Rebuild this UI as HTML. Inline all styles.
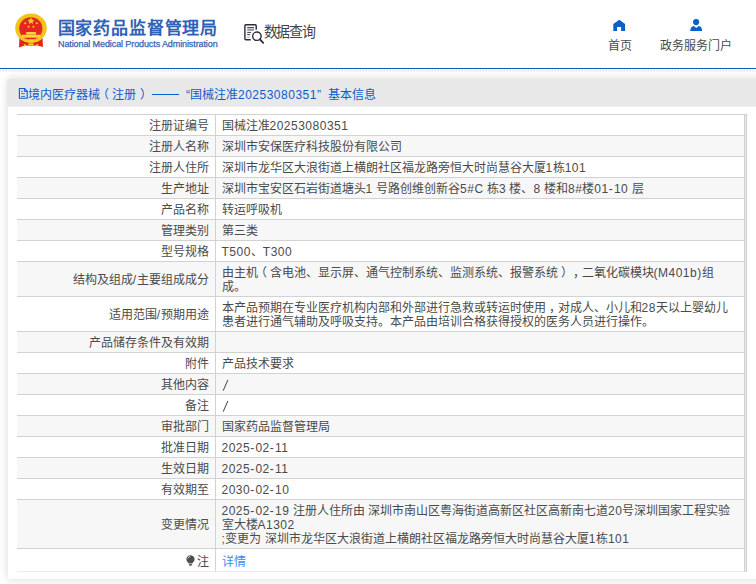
<!DOCTYPE html>
<html lang="zh-CN">
<head>
<meta charset="utf-8">
<style>
*{margin:0;padding:0;box-sizing:border-box;}
html,body{width:756px;height:584px;overflow:hidden;background:#fff;}
body{font-family:"Liberation Sans",sans-serif;color:#333;position:relative;text-spacing-trim:space-all;}
.hdr{position:absolute;left:0;top:0;width:756px;height:68px;background:#fff;}
.emb{position:absolute;left:0;top:0;}
.t1{position:absolute;left:57.5px;top:17.5px;font-size:17px;line-height:22px;font-weight:bold;color:#2d62b8;letter-spacing:0.85px;white-space:nowrap;}
.t2{position:absolute;left:58px;top:38px;font-size:9px;line-height:12px;color:#3563b4;font-weight:normal;-webkit-text-stroke:0.25px #3563b4;letter-spacing:-0.1px;white-space:nowrap;}
.dq{position:absolute;left:0;top:0;}
.dqt{position:absolute;left:263.5px;top:22px;font-size:14px;line-height:18px;color:#444;letter-spacing:-1.1px;transform:scaleY(1.05);transform-origin:0 0;white-space:nowrap;}
.nav{position:absolute;top:37.5px;font-size:12px;line-height:16px;color:#4a4a4a;white-space:nowrap;text-align:center;}
.blue{position:absolute;left:0;top:68px;width:756px;height:1px;background:#0b5cc0;}
.dots{position:absolute;left:0;top:70px;}
.panel{position:absolute;left:8px;top:79px;width:760px;height:500px;background:#fff;
 box-shadow:0 0 9px rgba(0,0,0,0.16);}
.ph{position:absolute;left:-1px;top:0;width:761px;height:28px;background:#e8e8e8;border-bottom:1px solid #eef0f8;}
.dsh{display:inline-block;width:27px;height:1px;background:#0b5ccc;vertical-align:4px;margin-left:4px;}
.q1{margin-left:7px;}
.q2{}
.jb{margin-left:7px;}
.phi{position:absolute;left:11px;top:8px;}
.pht{position:absolute;left:21px;top:7.6px;font-size:12px;line-height:16px;color:#0b5ccc;white-space:nowrap;}
table{position:absolute;left:9px;top:35px;width:728px;border-collapse:collapse;font-size:12px;line-height:14px;color:#4a4a4a;}
td{border-top:1px solid #d2d2d2;padding:4px 6px 2px 6px;vertical-align:middle;white-space:nowrap;}
td.l{width:198px;text-align:right;border-right:1px solid #d2d2d2;}
tr:nth-child(even) td{background:#f7f7f7;}
tr.last td{padding-top:6px;padding-bottom:2px;height:23px;border-bottom:1px solid #e8eaf4;}
.n{letter-spacing:0.5px;}
.lp{position:relative;left:-2.5px;}
.rp{position:relative;left:3px;}
.h{letter-spacing:1.2px;}
.bulb{vertical-align:0px;margin-right:2px;}
.rb{position:absolute;left:736px;top:35px;width:3px;height:458px;border:1px solid #d0d0d0;border-bottom:0;background:#ebebf2;}
a{color:#3c8bf0;text-decoration:none;}
</style>
</head>
<body>
<div class="hdr">
 <svg class="emb" width="60" height="52" viewBox="0 0 60 52">
  <path d="M19.5 38 L42.5 38 L43 47 Q37 44.5 31 46 Q25 44.5 19 47.5Z" fill="#e2231a"/>
  <ellipse cx="31" cy="28" rx="15.8" ry="14.6" fill="#f2c318"/>
  <ellipse cx="30.8" cy="28.5" rx="11.6" ry="11.2" fill="#e5281e"/>
  <path d="M21 38.2 Q31 45 41 38.2 L41.6 39.4 Q31 46.6 20.4 39.4Z" fill="#f4cf2a"/>
  <rect x="26.2" y="32" width="9.8" height="2.6" fill="#f6d24a"/>
  <rect x="22" y="34.8" width="18.6" height="2.9" fill="#f7d733"/>
  <path d="M31 17.6 l1.05 2.2 2.4.25 -1.8 1.6 .5 2.35 -2.15-1.2 -2.15 1.2 .5-2.35 -1.8-1.6 2.4-.25z" fill="#f6cf2a"/>
  <circle cx="25.2" cy="23.3" r="1" fill="#f6cf2a"/><circle cx="36.8" cy="23.3" r="1" fill="#f6cf2a"/>
  <circle cx="28.6" cy="26.8" r="1" fill="#f6cf2a"/><circle cx="33.4" cy="26.8" r="1" fill="#f6cf2a"/>
  <ellipse cx="31" cy="40.6" rx="3" ry="1.3" fill="#f4cf2a"/>
  <path d="M28 43.6 Q31 42.8 33.8 43.6 L33.2 45.8 Q31 45.3 28.6 45.8Z" fill="#f4cf2a"/>
  <path d="M23.5 44 L26 44.5 L25 47.2Z M36 44.5 L38.6 44 L37 47.2Z" fill="#f4d440"/>
 </svg>
 <div class="t1">国家药品监督管理局</div>
 <div class="t2">National Medical Products Administration</div>
 <svg class="dq" width="756" height="68"><path d="M250.7 39.7H245.8Q244.9 39.7 244.9 38.8V25.7Q244.9 24.8 245.8 24.8H255.3Q256.2 24.8 256.2 25.7V29.8" fill="none" stroke="#2b2b3a" stroke-width="1.4"/><path d="M247.2 27.6H254M247.2 32.4H251.2M247.2 34.6H250.2" stroke="#3a3a48" stroke-width="1"/><rect x="247.2" y="28.6" width="6.8" height="2.3" fill="#9a9aa4"/><path d="M247.2 37.1H250.2" stroke="#a8a8b0" stroke-width="1"/><circle cx="256.9" cy="36.2" r="4.2" fill="#fff" stroke="#2b2b3a" stroke-width="1.4"/><path d="M259.9 39.3L263.2 42.8" stroke="#2b2b3a" stroke-width="1.8" stroke-linecap="round"/></svg>
 <div class="dqt">数据查询</div>
 <svg style="position:absolute;left:0;top:0;" width="756" height="68"><path d="M613.3 23.9L619.3 19.8L625.1 23.9V30.9H621.1V26.9H617.1V30.9H613.3Z" fill="#0b5fc8"/><circle cx="696.1" cy="22.1" r="3.1" fill="#0b5fc8"/><path d="M690.3 31Q690.3 26.4 693.8 25.9L696.3 28L698.8 25.9Q702.1 26.4 702.1 31Z" fill="#0b5fc8"/></svg>
 <div class="nav" style="left:604px;width:32px;">首页</div>
 <div class="nav" style="left:658px;width:75px;">政务服务门户</div>
</div>
<div class="blue"></div>
<svg class="dots" width="756" height="2"><defs><pattern id="dp" width="3" height="2" patternUnits="userSpaceOnUse"><rect x="0" y="0" width="1" height="1" fill="#d9d9d9"/><rect x="2" y="1" width="1" height="1" fill="#e8e8e8"/></pattern></defs><rect width="756" height="2" fill="url(#dp)"/></svg>
<div class="panel">
 <div class="ph">
  <svg class="phi" width="11" height="13" viewBox="0 0 11 13"><path d="M1.4 1.5H6.6L9.2 4.3V11.3H1.4Z" fill="none" stroke="#0b5ccc" stroke-width="1.1"/><path d="M6.4 1.5V4.4H9.2" fill="none" stroke="#0b5ccc" stroke-width="1"/><path d="M3 4.4H5M3 6.6H7M3 9.4H7" stroke="#3a74d0" stroke-width="1"/></svg>
  <div class="pht">境内医疗器械<span class="lp" style="left:-3.5px">（</span>注册<span class="rp" style="left:4px">）</span><span class="dsh"></span><span class="q1">“</span>国械注准<span class="n">20253080351</span><span class="q2">”</span><span class="jb">基本信息</span></div></div>
 <table>
<tr><td class="l">注册证编号</td><td>国械注准<span class="n">20253080351</span></td></tr>
<tr><td class="l">注册人名称</td><td>深圳市安保医疗科技股份有限公司</td></tr>
<tr><td class="l">注册人住所</td><td>深圳市龙华区大浪街道上横朗社区福龙路旁恒大时尚慧谷大厦<span class="n">1</span>栋<span class="n">101</span></td></tr>
<tr><td class="l">生产地址</td><td>深圳市宝安区石岩街道塘头<span class="n">1</span> 号路创维创新谷<span class="n">5#C</span> 栋<span class="n">3</span> 楼、<span class="n">8</span> 楼和<span class="n">8#</span>楼<span class="n">01<span class="h">-</span>10</span> 层</td></tr>
<tr><td class="l">产品名称</td><td>转运呼吸机</td></tr>
<tr><td class="l">管理类别</td><td>第三类</td></tr>
<tr><td class="l">型号规格</td><td><span class="n">T500</span>、<span class="n">T300</span></td></tr>
<tr><td class="l">结构及组成<span class="n">/</span>主要组成成分</td><td>由主机<span class="lp">（</span>含电池、显示屏、通气控制系统、监测系统、报警系统<span class="rp">）</span><span class="rp">，</span>二氧化碳模块<span class="n">(M401b)</span>组<br>成。</td></tr>
<tr><td class="l">适用范围<span class="n">/</span>预期用途</td><td>本产品预期在专业医疗机构内部和外部进行急救或转运时使用<span class="rp">，</span>对成人、小儿和<span class="n">28</span>天以上婴幼儿<br>患者进行通气辅助及呼吸支持。本产品由培训合格获得授权的医务人员进行操作。</td></tr>
<tr><td class="l">产品储存条件及有效期</td><td></td></tr>
<tr><td class="l">附件</td><td>产品技术要求</td></tr>
<tr><td class="l">其他内容</td><td><svg width="7" height="14" style="vertical-align:top"><path d="M1.2 12.6L5.9 1.9" stroke="#4a4a4a" stroke-width="1.05"/></svg></td></tr>
<tr><td class="l">备注</td><td><svg width="7" height="14" style="vertical-align:top"><path d="M1.2 12.6L5.9 1.9" stroke="#4a4a4a" stroke-width="1.05"/></svg></td></tr>
<tr><td class="l">审批部门</td><td>国家药品监督管理局</td></tr>
<tr><td class="l">批准日期</td><td><span class="n">2025<span class="h">-</span>02<span class="h">-</span>11</span></td></tr>
<tr><td class="l">生效日期</td><td><span class="n">2025<span class="h">-</span>02<span class="h">-</span>11</span></td></tr>
<tr><td class="l">有效期至</td><td><span class="n">2030<span class="h">-</span>02<span class="h">-</span>10</span></td></tr>
<tr><td class="l">变更情况</td><td><span class="n">2025<span class="h">-</span>02<span class="h">-</span>19</span> 注册人住所由 深圳市南山区粤海街道高新区社区高新南七道<span class="n">20</span>号深圳国家工程实验<br>室大楼<span class="n">A1302</span><br><span class="n">;</span>变更为 深圳市龙华区大浪街道上横朗社区福龙路旁恒大时尚慧谷大厦<span class="n">1</span>栋<span class="n">101</span></td></tr>
<tr class="last"><td class="l"><svg class="bulb" width="9" height="11" viewBox="0 0 9 11"><path d="M4.5 0.3C2.2 0.3 0.4 2 0.4 4.2c0 1.6.9 2.6 1.7 3.4.3.3.5.6.5 1h3.8c0-.4.2-.7.5-1 .8-.8 1.7-1.8 1.7-3.4C8.6 2 6.8 .3 4.5 .3z" fill="#4e4e52"/><path d="M2.9 9.1H6.1V10Q6.1 10.8 5.3 10.8H3.7Q2.9 10.8 2.9 10Z" fill="#6a6a6e"/><path d="M1.9 3.2Q2.4 1.6 4 1.3" stroke="#d8d8dc" stroke-width=".9" fill="none" stroke-linecap="round"/></svg>注</td><td><a>详情</a></td></tr>
 </table>
 <div class="rb"></div>
</div>
</body>
</html>
